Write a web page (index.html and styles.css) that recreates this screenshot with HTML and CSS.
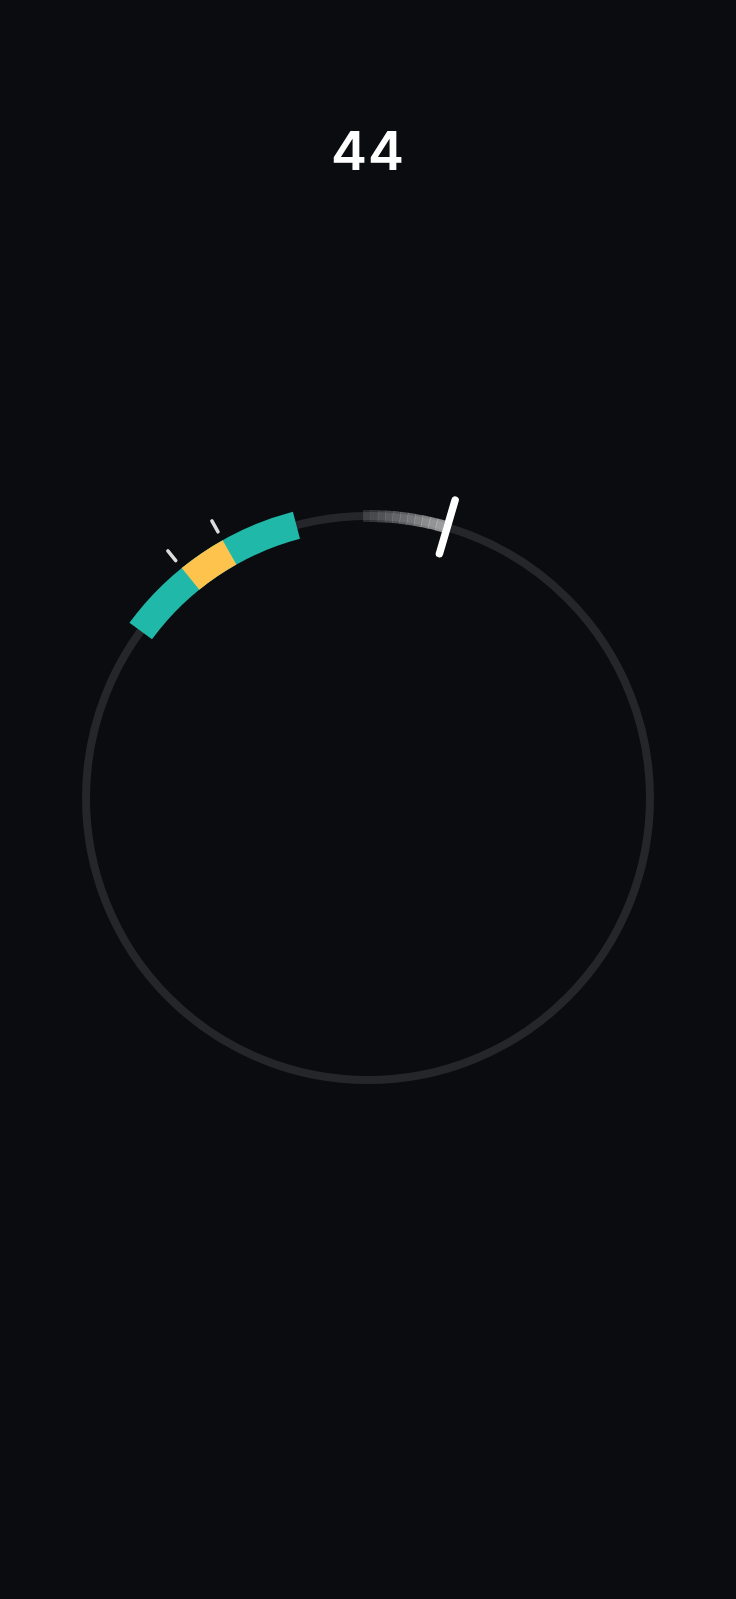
FILE: index.html
```html
<!DOCTYPE html>
<html lang="en">
<head>
    <meta charset="UTF-8">
    <meta name="viewport" content="width=device-width, initial-scale=1.0">
    <title>Timing Ring</title>
    <link rel="stylesheet" href="styles.css">
</head>
<body>
    <div class="game">
        <div class="score">44</div>

        <svg class="dial" viewBox="-368 -368 736 736" width="736" height="736">
            <!-- track -->
            <circle class="track" r="282"></circle>

            <!-- target zone -->
            <circle class="zone" r="282" pathLength="360" stroke-dasharray="39 321" transform="rotate(-143.7)"></circle>
            <circle class="perfect" r="282" pathLength="360" stroke-dasharray="9.6 350.4" transform="rotate(-129)"></circle>
            <line class="tick" x1="0" y1="-305.5" x2="0" y2="-318" transform="rotate(-39)"></line>
            <line class="tick" x1="0" y1="-305.5" x2="0" y2="-318" transform="rotate(-29.4)"></line>

            <!-- needle trail -->
            <g class="trail">
                <circle r="282" pathLength="360" stroke-dasharray="1.6 358.4" transform="rotate(-91)" opacity="0.13"></circle>
                <circle r="282" pathLength="360" stroke-dasharray="1.6 358.4" transform="rotate(-89.5)" opacity="0.17"></circle>
                <circle r="282" pathLength="360" stroke-dasharray="1.6 358.4" transform="rotate(-88)" opacity="0.21"></circle>
                <circle r="282" pathLength="360" stroke-dasharray="1.6 358.4" transform="rotate(-86.5)" opacity="0.25"></circle>
                <circle r="282" pathLength="360" stroke-dasharray="1.6 358.4" transform="rotate(-85)" opacity="0.29"></circle>
                <circle r="282" pathLength="360" stroke-dasharray="1.6 358.4" transform="rotate(-83.5)" opacity="0.33"></circle>
                <circle r="282" pathLength="360" stroke-dasharray="1.6 358.4" transform="rotate(-82)" opacity="0.37"></circle>
                <circle r="282" pathLength="360" stroke-dasharray="1.6 358.4" transform="rotate(-80.5)" opacity="0.42"></circle>
                <circle r="282" pathLength="360" stroke-dasharray="1.6 358.4" transform="rotate(-79)" opacity="0.47"></circle>
                <circle r="282" pathLength="360" stroke-dasharray="1.6 358.4" transform="rotate(-77.5)" opacity="0.51"></circle>
                <circle r="282" pathLength="360" stroke-dasharray="1.6 358.4" transform="rotate(-76)" opacity="0.55"></circle>
            </g>

            <!-- needle -->
            <line class="needle" x1="0" y1="-254.5" x2="0" y2="-310.5" transform="rotate(16.3)"></line>
        </svg>
    </div>
</body>
</html>
```

FILE: styles.css
```css
body {
    margin: 0;
    min-height: 100vh;
    background-color: #0b0c10;
    font-family: Inter, "Noto Sans", sans-serif;
    color: #fff;
    overflow: hidden;
}
.game {
    display: flex;
    flex-direction: column;
    align-items: center;
    padding-top: 124px;
}
.score {
    font-size: 54px;
    font-weight: 600;
    line-height: 54px;
    height: 54px;
    letter-spacing: 1px;
}
.dial {
    display: block;
    margin-top: 252px;
}
.dial circle {
    fill: none;
}
.track {
    stroke: #25262a;
    stroke-width: 8;
}
.zone {
    stroke: #20b9a9;
    stroke-width: 28;
}
.perfect {
    stroke: #fec34c;
    stroke-width: 28;
}
.tick {
    stroke: #dcdcdc;
    stroke-width: 3.5;
    stroke-linecap: round;
}
.trail circle {
    stroke: #fff;
    stroke-width: 12;
}
.needle {
    stroke: #fff;
    stroke-width: 7.5;
    stroke-linecap: round;
}
```
